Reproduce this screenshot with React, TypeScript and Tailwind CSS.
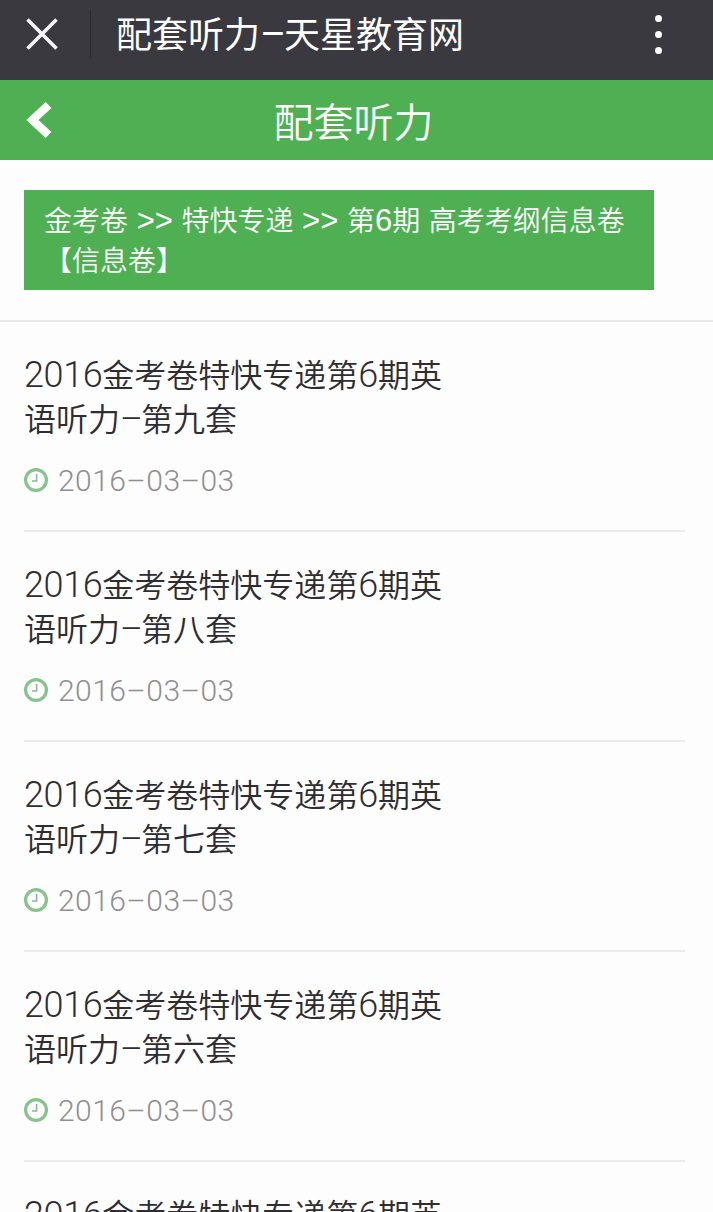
import { Fragment } from "react";
import clsx from "clsx";

const lessons = [
  { id: 9, name: "第九套", date: "2016–03–03" },
  { id: 8, name: "第八套", date: "2016–03–03" },
  { id: 7, name: "第七套", date: "2016–03–03" },
  { id: 6, name: "第六套", date: "2016–03–03" },
  { id: 5, name: "第五套", date: "2016–03–03" },
];

// Digits, dashes and arrows are set in their own font and size next to the Chinese text
function Mixed({ text, latin, dash }: { text: string; latin?: string; dash?: string }) {
  return (
    <>
      {text.split(/([\d> ]+|–)/).map((part, i) =>
        i % 2 === 1 ? (
          <span
            key={i}
            className={clsx(
              "leading-[0]",
              part === "–" ? clsx("inline-block text-center font-['Roboto',sans-serif]", dash) : latin
            )}
          >
            {part}
          </span>
        ) : (
          <Fragment key={i}>{part}</Fragment>
        )
      )}
    </>
  );
}

function ClockIcon() {
  return (
    <svg width="24" height="24" viewBox="0 0 24 24" fill="none" className="shrink-0">
      <circle cx="12" cy="12" r="10.4" stroke="#85c48b" strokeWidth="3.2" />
      <path d="M12.6 6v7H8" stroke="#8fb79c" strokeWidth="1.6" />
    </svg>
  );
}

export default function App() {
  return (
    <div className="h-[1212px] w-[713px] overflow-hidden bg-[#fdfdfe] font-['Noto_Sans_CJK_SC',sans-serif]">
      {/* Browser bar */}
      <header className="flex h-20 items-center bg-[#3a393f] pb-3 text-white">
        <svg width="32" height="32" viewBox="0 0 32 32" className="ml-[26px] shrink-0" fill="none">
          <path d="M1.5 1.5l29 29M30.5 1.5l-29 29" stroke="#f6f4fb" strokeWidth="3.6" />
        </svg>
        <div className="ml-8 h-12 w-px bg-[#2d2c32]" />
        <h1 className="ml-[25px] pb-1 text-4xl leading-none whitespace-nowrap">
          <Mixed text="配套听力–天星教育网" dash="w-[24px] text-[40px]" />
        </h1>
        <div className="mr-[51px] ml-auto flex flex-col gap-[9px]">
          <span className="size-[7px] rounded-full bg-white" />
          <span className="size-[7px] rounded-full bg-white" />
          <span className="size-[7px] rounded-full bg-white" />
        </div>
      </header>

      {/* Page title */}
      <div className="grid h-20 grid-cols-[1fr_auto_1fr] items-center bg-[#4eb052] text-white">
        <svg width="26" height="38" viewBox="0 0 26 38" className="ml-[26px]" fill="none">
          <path d="M22.5 4L6.5 19l16 15" stroke="#fff" strokeWidth="8.5" />
        </svg>
        <h2 className="pr-[6px] pb-px text-[40px] leading-none font-[350]">配套听力</h2>
      </div>

      <div className="border-b-2 border-[#e8e8eb] px-6 py-[30px]">
        <div className="w-[630px] bg-[#4eb052] px-5 pt-[9px] pb-[11px] text-[28px] leading-10 font-[350] whitespace-nowrap text-white">
          <Mixed
            text="金考卷 >> 特快专递 >> 第6期 高考考纲信息卷"
            latin="font-['Liberation_Sans',sans-serif] text-[31px]"
          />
          <br />
          【信息卷】
        </div>
      </div>

      <ul className="pr-7 pl-6">
        {lessons.map((lesson) => (
          <li key={lesson.id} className="h-[210px] border-b-2 border-[#ebebee] pt-[29px]">
            <p className="text-[32px] leading-[44px] font-[350] whitespace-nowrap text-[#2e2d31]">
              <Mixed
                text="2016金考卷特快专递第6期英"
                latin="font-['Roboto',sans-serif] font-light text-[36px] tracking-[-0.4px]"
              />
              <br />
              <Mixed text={`语听力–${lesson.name}`} dash="w-[21px] text-[35px]" />
            </p>
            <div className="mt-[21px] flex h-10 items-center gap-2.5 font-['Roboto',sans-serif] text-[30px] font-light tracking-[0.45px] text-[#8f8e92]">
              <ClockIcon />
              <span>{lesson.date}</span>
            </div>
          </li>
        ))}
      </ul>
    </div>
  );
}
